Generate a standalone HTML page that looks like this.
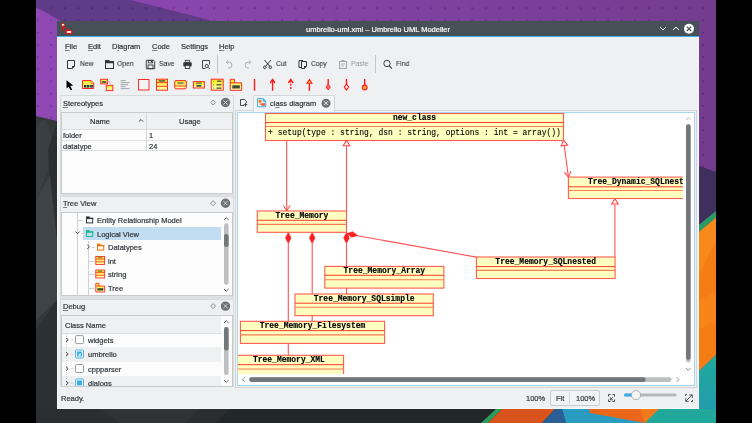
<!DOCTYPE html>
<html><head><meta charset="utf-8"><title>Umbrello</title>
<style>
*{margin:0;padding:0;box-sizing:border-box}
html,body{width:752px;height:423px;overflow:hidden;background:#000}
body{position:relative;font-family:"Liberation Sans",sans-serif;font-size:7.5px;color:#31363b}
.a{position:absolute}
.t{white-space:nowrap;line-height:10px;will-change:transform;-webkit-text-stroke:0.2px currentColor}
u{text-decoration-thickness:0.6px;text-underline-offset:0.9px;text-decoration-color:#7d8184}
.m{font-family:"Liberation Mono",monospace;font-size:8px;color:#000;white-space:nowrap;line-height:10px}
.b{font-weight:bold}
svg{position:absolute;overflow:visible}
</style></head><body>

<svg style="left:0;top:0" width="752" height="423" viewBox="0 0 752 423">
<defs>
<linearGradient id="pg" x1="36" y1="0" x2="716" y2="0" gradientUnits="userSpaceOnUse">
<stop offset="0" stop-color="#8f48b4"/><stop offset="1" stop-color="#733c8f"/></linearGradient>
<linearGradient id="tg" x1="699" y1="360" x2="716" y2="423" gradientUnits="userSpaceOnUse">
<stop offset="0" stop-color="#1fa99a"/><stop offset="1" stop-color="#2497b4"/></linearGradient>
<pattern id="dots" x="36.7" y="7.3" width="13.58" height="12.2" patternUnits="userSpaceOnUse">
<circle cx="1" cy="1" r="0.65" fill="#000" fill-opacity="0.55"/></pattern>
</defs>
<rect x="36" y="0" width="680" height="423" fill="url(#pg)"/>
<polygon points="36,0 131,0 213,21 61,21 36,7" fill="#603b88"/>
<rect x="36" y="0" width="680" height="175" fill="url(#dots)"/>
<polygon points="36,116 57,121 57,423 36,423" fill="#34383b"/>
<polygon points="36,125 45,119 57,150 36,200" fill="#3c3f42"/>
<polygon points="48,150 57,121 57,240 52,240" fill="#2b2f32"/>
<polygon points="36,200 50,175 57,240 57,300 36,320" fill="#404346"/>
<polygon points="36,330 57,300 57,423 36,423" fill="#2c3033"/>
<polygon points="699,166 716,172 716,211 699,225" fill="#3f2f5c"/>
<polygon points="699,225 716,211 716,218 699,232" fill="#2a9d62"/>
<polygon points="699,232 716,218 716,355 699,371" fill="#f47d16"/><polygon points="699,232 716,218 716,240 699,275" fill="#f8891c"/><polygon points="699,300 716,292 716,320 699,330" fill="#f68418"/>
<polygon points="699,371 716,355 716,423 699,423" fill="url(#tg)"/>
<rect x="36" y="409" width="680" height="14" fill="#22282a"/><polygon points="36,409 230,409 215,423 36,423" fill="#2a2e31"/><polygon points="100,409 200,409 185,423 120,423" fill="#2f3336"/>
<polygon points="496,409 502,409 488,423 481,423" fill="#2a9d5c"/>
<polygon points="502,409 555,409 542,423 488,423" fill="#d9541d"/>
<polygon points="555,409 562,409 566,423 542,423" fill="#2a5f96"/>
<polygon points="562,409 716,409 716,423 566,423" fill="#2a9cc2"/>
<polygon points="589,409 659,409 645,423 590,413" fill="#ea661b"/>
<polygon points="640,409 659,409 645,423" fill="#f27a1c"/>
<polygon points="659,409 716,409 716,423 645,423" fill="#22a89b"/>
</svg>

<div class="a" style="left:57px;top:21px;width:642px;height:388px;background:#eff0f1;border:1px solid #f6f7f7"></div>
<div class="a" style="left:57px;top:21px;width:642px;height:15px;background:#475057"></div>
<div class="a" style="left:57px;top:36px;width:642px;height:1px;background:#3daee9"></div>
<div class="a t" style="left:57.00px;top:25.20px;font-size:7.5px;color:#fcfcfc;width:642px;text-align:center">umbrello-uml.xmi – Umbrello UML Modeller</div>
<svg style="left:0;top:0" width="752" height="423" viewBox="0 0 752 423">
<path d="M63 26.3 V28.8 M61.6 27.4 H64.4 M63 28.8 L61.6 31 M63 28.8 L64.4 31 M63.8 26.2 L68.3 30.2" stroke="#ee1111" stroke-width="1" fill="none"/>
<circle cx="63" cy="24.8" r="1.5" fill="#fff" stroke="#ee1111" stroke-width="0.9"/>
<ellipse cx="69" cy="32" rx="3.1" ry="1.7" fill="#fff" stroke="#ee1111" stroke-width="1.2"/>
</svg>
<svg style="left:658px;top:23px" width="40" height="12" viewBox="0 0 40 12">
<path d="M2 4 L5 7 L8 4" stroke="#fcfcfc" stroke-width="1" fill="none"/>
<path d="M15 7 L18 4 L21 7" stroke="#fcfcfc" stroke-width="1" fill="none"/>
<circle cx="31" cy="5.8" r="5" fill="#fcfcfc"/>
<path d="M28.8 3.6 L33.2 8 M33.2 3.6 L28.8 8" stroke="#475057" stroke-width="1.2"/>
</svg>
<div class="a t" style="left:65.00px;top:41.80px;font-size:7.5px;color:#31363b;"><u>F</u>ile</div>
<div class="a t" style="left:88.00px;top:41.80px;font-size:7.5px;color:#31363b;"><u>E</u>dit</div>
<div class="a t" style="left:111.80px;top:41.80px;font-size:7.5px;color:#31363b;">D<u>i</u>agram</div>
<div class="a t" style="left:152.40px;top:41.80px;font-size:7.5px;color:#31363b;"><u>C</u>ode</div>
<div class="a t" style="left:180.90px;top:41.80px;font-size:7.5px;color:#31363b;">Setti<u>n</u>gs</div>
<div class="a t" style="left:219.40px;top:41.80px;font-size:7.5px;color:#31363b;"><u>H</u>elp</div>
<div class="a t" style="left:79.70px;top:59.03px;font-size:7.7px;color:#31363b;transform:scaleX(0.88);transform-origin:0 0;-webkit-text-stroke:0.1px currentColor">New</div>
<div class="a t" style="left:117.00px;top:59.03px;font-size:7.7px;color:#31363b;transform:scaleX(0.88);transform-origin:0 0;-webkit-text-stroke:0.1px currentColor">Open</div>
<div class="a t" style="left:159.00px;top:59.03px;font-size:7.7px;color:#31363b;transform:scaleX(0.88);transform-origin:0 0;-webkit-text-stroke:0.1px currentColor">Save</div>
<div class="a t" style="left:275.90px;top:59.03px;font-size:7.7px;color:#31363b;transform:scaleX(0.88);transform-origin:0 0;-webkit-text-stroke:0.1px currentColor">Cut</div>
<div class="a t" style="left:311.00px;top:59.03px;font-size:7.7px;color:#31363b;transform:scaleX(0.88);transform-origin:0 0;-webkit-text-stroke:0.1px currentColor">Copy</div>
<div class="a t" style="left:350.90px;top:59.03px;font-size:7.7px;color:#a0a3a6;transform:scaleX(0.88);transform-origin:0 0;-webkit-text-stroke:0.1px currentColor">Paste</div>
<div class="a t" style="left:396.00px;top:59.03px;font-size:7.7px;color:#31363b;transform:scaleX(0.88);transform-origin:0 0;-webkit-text-stroke:0.1px currentColor">Find</div>
<div class="a" style="left:217px;top:55px;width:1px;height:18px;background:#c4c6c8"></div>
<div class="a" style="left:375px;top:55px;width:1px;height:18px;background:#c4c6c8"></div>
<div class="a" style="left:60px;top:193px;width:174px;height:4px;background:#dfe0e2"></div>
<div class="a" style="left:60px;top:296px;width:174px;height:4px;background:#dfe0e2"></div>
<div class="a" style="left:60px;top:95px;width:174px;height:99px;border:1px solid #d9dadc;background:#eff0f1"></div>
<div class="a t" style="left:63.00px;top:99.00px;font-size:7.5px;color:#31363b;"><u>S</u>tereotypes</div>
<svg style="left:0;top:0" width="752" height="423" viewBox="0 0 752 423"><path d="M213.1 100.0 L215.6 102.5 L213.1 105.0 L210.6 102.5 Z" fill="none" stroke="#7f8386" stroke-width="0.9"/><circle cx="225.5" cy="102.5" r="4.7" fill="#6e7276"/><path d="M223.39999999999998 100.4 L227.6 104.6 M227.6 100.4 L223.39999999999998 104.6" stroke="#e6e7e8" stroke-width="0.8"/></svg>
<div class="a" style="left:61px;top:112px;width:172px;height:82px;border:1px solid #c8cacc;background:#fcfcfc"></div>
<div class="a" style="left:62px;top:113px;width:170px;height:17px;background:#eff0f1"></div>
<div class="a" style="left:62px;top:129px;width:170px;height:1px;background:#dcdddf"></div>
<div class="a" style="left:62px;top:140px;width:170px;height:1px;background:#e2e3e4"></div>
<div class="a" style="left:62px;top:150px;width:170px;height:1px;background:#dcdddf"></div>
<div class="a" style="left:146px;top:113px;width:1px;height:38px;background:#d6d7d9"></div>
<div class="a t" style="left:90.00px;top:117.20px;font-size:7.5px;color:#31363b;">Name</div>
<div class="a t" style="left:178.60px;top:117.20px;font-size:7.5px;color:#31363b;">Usage</div>
<svg style="left:138px;top:118px" width="6" height="5" viewBox="0 0 6 5"><path d="M0.8 3.7 L3 1.5 L5.2 3.7" fill="none" stroke="#31363b" stroke-width="0.9"/></svg>
<div class="a t" style="left:63.10px;top:131.00px;font-size:7.5px;color:#31363b;">folder</div>
<div class="a t" style="left:149.20px;top:131.00px;font-size:7.5px;color:#31363b;">1</div>
<div class="a t" style="left:63.10px;top:141.70px;font-size:7.5px;color:#31363b;">datatype</div>
<div class="a t" style="left:149.20px;top:141.70px;font-size:7.5px;color:#31363b;">24</div>
<div class="a" style="left:60px;top:196px;width:174px;height:100px;border:1px solid #d9dadc;background:#eff0f1"></div>
<div class="a t" style="left:63.10px;top:199.20px;font-size:7.5px;color:#31363b;"><u>T</u>ree View</div>
<svg style="left:0;top:0" width="752" height="423" viewBox="0 0 752 423"><path d="M213.1 200.7 L215.6 203.2 L213.1 205.7 L210.6 203.2 Z" fill="none" stroke="#7f8386" stroke-width="0.9"/><circle cx="225.5" cy="203.2" r="4.7" fill="#6e7276"/><path d="M223.39999999999998 201.1 L227.6 205.29999999999998 M227.6 201.1 L223.39999999999998 205.29999999999998" stroke="#e6e7e8" stroke-width="0.8"/></svg>
<div class="a" style="left:61px;top:212px;width:172px;height:84px;border:1px solid #c8cacc;background:#fcfcfc"></div>
<div class="a" style="left:83px;top:227px;width:138px;height:13px;background:#c2dcf1"></div>
<div class="a" style="left:77px;top:213px;width:1px;height:82px;background:#d0d2d4"></div>
<div class="a" style="left:88px;top:241px;width:1px;height:54px;background:#d0d2d4"></div>
<div class="a" style="left:78px;top:220px;width:5px;height:1px;background:#d0d2d4"></div>
<div class="a" style="left:81px;top:233px;width:2px;height:1px;background:#d0d2d4"></div>
<div class="a" style="left:92px;top:247px;width:3px;height:1px;background:#d0d2d4"></div>
<div class="a" style="left:89px;top:261px;width:5px;height:1px;background:#d0d2d4"></div>
<div class="a" style="left:89px;top:274px;width:5px;height:1px;background:#d0d2d4"></div>
<div class="a" style="left:89px;top:288px;width:5px;height:1px;background:#d0d2d4"></div>
<div class="a t" style="left:97.10px;top:216.20px;font-size:7.5px;color:#31363b;">Entity Relationship Model</div>
<div class="a t" style="left:97.10px;top:229.70px;font-size:7.5px;color:#31363b;">Logical View</div>
<div class="a t" style="left:107.80px;top:243.20px;font-size:7.5px;color:#31363b;">Datatypes</div>
<div class="a t" style="left:107.80px;top:257.00px;font-size:7.5px;color:#31363b;">int</div>
<div class="a t" style="left:107.80px;top:270.40px;font-size:7.5px;color:#31363b;">string</div>
<div class="a t" style="left:107.80px;top:284.00px;font-size:7.5px;color:#31363b;">Tree</div>
<svg style="left:0;top:0" width="752" height="423" viewBox="0 0 752 423"><rect x="86.5" y="218.20000000000002" width="6.2" height="4.7" fill="none" stroke="#31363b" stroke-width="1"/><rect x="86" y="216.4" width="3.6" height="2.4" fill="#31363b"/><rect x="86" y="217.9" width="7.2" height="1.2" fill="#31363b"/><rect x="86.5" y="231.8" width="6.2" height="4.7" fill="none" stroke="#1dba8f" stroke-width="1"/><rect x="86" y="230" width="3.6" height="2.4" fill="#1dba8f"/><rect x="86" y="231.5" width="7.2" height="1.2" fill="#1dba8f"/><path d="M75.5 231.5 L77.6 233.6 L79.7 231.5" fill="none" stroke="#31363b" stroke-width="0.9"/><path d="M87.3 244.7 L89.4 246.8 L87.3 248.9" fill="none" stroke="#31363b" stroke-width="0.9"/><rect x="97.5" y="245.4" width="6.2" height="4.7" fill="none" stroke="#f67400" stroke-width="1"/><rect x="97" y="243.6" width="3.6" height="2.4" fill="#f67400"/><rect x="97" y="245.1" width="7.2" height="1.2" fill="#f67400"/><rect x="95.8" y="256.5" width="8.8" height="8" fill="url(#yg)" stroke="#ff3030" stroke-width="0.9"/><path d="M95.8 259.1 H104.6 M95.8 261.8 H104.6" stroke="#ff3030" stroke-width="0.8"/><rect x="97.8" y="257.3" width="4.6" height="1" fill="#6a7a4a"/><rect x="95.8" y="270" width="8.8" height="8" fill="url(#yg)" stroke="#ff3030" stroke-width="0.9"/><path d="M95.8 272.6 H104.6 M95.8 275.3 H104.6" stroke="#ff3030" stroke-width="0.8"/><rect x="97.8" y="270.8" width="4.6" height="1" fill="#6a7a4a"/><path d="M95.8 286 V283.3 H99 V286 H104.6 V292 H95.8 Z" fill="url(#yg)" stroke="#ff3030" stroke-width="0.9"/><path d="M95.8 286 H99" stroke="#ff3030" stroke-width="0.8"/><rect x="97.3" y="288.2" width="6" height="2.3" fill="#3a4a2a"/><path d="M224 220 L226.3 217.8 L228.6 220" fill="none" stroke="#31363b" stroke-width="0.8"/><rect x="224" y="223.3" width="4.6" height="61.5" rx="2.3" fill="#bdbfc1"/><rect x="224" y="234" width="4.6" height="13" rx="2.3" fill="#73777b"/><path d="M224 289 L226.3 291.2 L228.6 289" fill="none" stroke="#31363b" stroke-width="0.8"/></svg>
<div class="a" style="left:60px;top:299px;width:174px;height:88px;border:1px solid #d9dadc;background:#eff0f1"></div>
<div class="a t" style="left:63.10px;top:301.80px;font-size:7.5px;color:#31363b;"><u>D</u>ebug</div>
<svg style="left:0;top:0" width="752" height="423" viewBox="0 0 752 423"><path d="M213.1 303.6 L215.6 306.1 L213.1 308.6 L210.6 306.1 Z" fill="none" stroke="#7f8386" stroke-width="0.9"/><circle cx="225.5" cy="306.1" r="4.7" fill="#6e7276"/><path d="M223.39999999999998 304.0 L227.6 308.20000000000005 M227.6 304.0 L223.39999999999998 308.20000000000005" stroke="#e6e7e8" stroke-width="0.8"/></svg>
<div class="a" style="left:61px;top:315px;width:172px;height:72px;border:1px solid #c8cacc;background:#fcfcfc"></div>
<div class="a" style="left:62px;top:316px;width:159px;height:17px;background:#eff0f1"></div>
<div class="a" style="left:62px;top:333px;width:159px;height:1px;background:#dcdddf"></div>
<div class="a" style="left:62px;top:347px;width:159px;height:14.5px;background:#eff0f1"></div>
<div class="a" style="left:62px;top:376px;width:159px;height:10px;background:#eff0f1"></div>
<div class="a t" style="left:64.80px;top:321.00px;font-size:7.5px;color:#31363b;">Class Name</div>
<div class="a t" style="left:88.30px;top:336.00px;font-size:7.5px;color:#31363b;">widgets</div>
<div class="a t" style="left:88.30px;top:350.40px;font-size:7.5px;color:#31363b;">umbrello</div>
<div class="a t" style="left:88.30px;top:364.90px;font-size:7.5px;color:#31363b;">cppparser</div>
<div class="a t" style="left:88.30px;top:379.30px;font-size:7.5px;color:#31363b;">dialogs</div>
<svg style="left:0;top:0" width="752" height="423" viewBox="0 0 752 423"><path d="M66.5 334 V386" stroke="#c8cacc" stroke-width="0.8" stroke-dasharray="1 1"/><path d="M66 337.8 L68.2 339.8 L66 341.8" fill="none" stroke="#31363b" stroke-width="0.9"/><path d="M71 339.8 H73.5" stroke="#c8cacc" stroke-width="0.8"/><rect x="75.5" y="335.6" width="8" height="8" rx="1" fill="#fcfcfc" stroke="#8c9093" stroke-width="0.9"/><path d="M66 352.2 L68.2 354.2 L66 356.2" fill="none" stroke="#31363b" stroke-width="0.9"/><path d="M71 354.2 H73.5" stroke="#c8cacc" stroke-width="0.8"/><rect x="75.5" y="350.0" width="8" height="8" rx="1" fill="#fcfcfc" stroke="#3daee9" stroke-width="0.9"/><rect x="77" y="351.5" width="5" height="5" fill="#3daee9"/><path d="M77.8 355.7 L80.6 352.9 V355.7 Z" fill="#fcfcfc"/><path d="M66 366.7 L68.2 368.7 L66 370.7" fill="none" stroke="#31363b" stroke-width="0.9"/><path d="M71 368.7 H73.5" stroke="#c8cacc" stroke-width="0.8"/><rect x="75.5" y="364.5" width="8" height="8" rx="1" fill="#fcfcfc" stroke="#8c9093" stroke-width="0.9"/><path d="M66 381.1 L68.2 383.1 L66 385.1" fill="none" stroke="#31363b" stroke-width="0.9"/><path d="M71 383.1 H73.5" stroke="#c8cacc" stroke-width="0.8"/><rect x="75.5" y="378.90000000000003" width="8" height="8" rx="1" fill="#fcfcfc" stroke="#3daee9" stroke-width="0.9"/><rect x="77" y="380.40000000000003" width="5" height="5" fill="#3daee9"/><path d="M224 323 L226.3 320.8 L228.6 323" fill="none" stroke="#31363b" stroke-width="0.8"/><rect x="224" y="327" width="4.6" height="48" rx="2.3" fill="#bdbfc1"/><rect x="224" y="327" width="4.6" height="23.5" rx="2.3" fill="#73777b"/><path d="M224 380 L226.3 382.2 L228.6 380" fill="none" stroke="#31363b" stroke-width="0.8"/></svg>
<div class="a" style="left:61px;top:386px;width:172px;height:1px;background:#c8cacc"></div>
<div class="a" style="left:58px;top:387px;width:176px;height:20px;background:#eff0f1"></div>
<div class="a t" style="left:60.70px;top:394.20px;font-size:7.5px;color:#31363b;">Ready.</div>
<div class="a" style="left:235px;top:110px;width:462px;height:278px;border:1px solid #d3d5d7;background:#eff0f1"></div>
<div class="a" style="left:253px;top:95px;width:82px;height:17px;background:#f3f4f5;border:1px solid #d3d5d7;border-bottom:none;border-radius:2px 2px 0 0"></div>
<div class="a t" style="left:269.90px;top:98.90px;font-size:7.5px;color:#31363b;">cl<u>a</u>ss diagram</div>
<svg style="left:0;top:0" width="752" height="423" viewBox="0 0 752 423"><path d="M240.5 99.5 H244.5 L246.5 101.5 V103 M240.5 99.5 V105.5 H244" fill="none" stroke="#31363b" stroke-width="0.9"/><path d="M245.5 102.8 V106.6 M243.6 104.7 H247.4" stroke="#31363b" stroke-width="0.9"/><path d="M257.5 98.5 H263.2 L265.8 101.1 V106.8 H257.5 Z" fill="#e8f4fc" stroke="#3daee9" stroke-width="1"/><path d="M263 98.5 V101.3 H265.8" fill="#3daee9" stroke="#3daee9" stroke-width="0.6"/><rect x="258.7" y="99.8" width="2.8" height="2.8" fill="#f67400"/><rect x="261.3" y="103.2" width="3.6" height="2.6" fill="#f05a28"/><path d="M260.1 102.6 V104.5 H261.3" stroke="#f67400" stroke-width="0.8" fill="none"/><circle cx="326" cy="103.2" r="4.5" fill="#6e7276"/><path d="M324 101.2 L328 105.2 M328 101.2 L324 105.2" stroke="#eff0f1" stroke-width="1"/></svg>
<div class="a" style="left:237px;top:112px;width:457.5px;height:274px;border:1px solid #a6d6f0;background:#fff"></div>
<svg style="left:0;top:0;will-change:transform" width="752" height="423" viewBox="0 0 752 423"><defs><clipPath id="vp"><rect x="237.8" y="112.8" width="445" height="261.2"/></clipPath></defs><g clip-path="url(#vp)"><path d="M286.7 140.2 L286.7 211" fill="none" stroke="#ff5252" stroke-width="1.1"/><path d="M290.00 205.50 L286.7 211 L283.40 205.50" fill="none" stroke="#ff5252" stroke-width="1.1"/><path d="M346.5 145.5 L346.5 211" fill="none" stroke="#ff5252" stroke-width="1.1"/><path d="M343.20 145.70 L346.5 140.4 L349.80 145.70 Z" fill="#fff" stroke="#ff4545" stroke-width="1.1"/><path d="M564.2 145 L568.4 177" fill="none" stroke="#ff5252" stroke-width="1.1"/><path d="M561.10 145.88 L563.7 140.2 L567.64 145.04 Z" fill="#fff" stroke="#ff4545" stroke-width="1.1"/><path d="M570.98 171.23 L568.4 177.1 L564.43 172.06" fill="none" stroke="#ff5252" stroke-width="1.1"/><path d="M614.9 204.7 L614.9 257" fill="none" stroke="#ff5252" stroke-width="1.1"/><path d="M611.60 204.00 L614.9 198.7 L618.20 204.00 Z" fill="#fff" stroke="#ff4545" stroke-width="1.1"/><path d="M288.3 243.5 L288.3 355.3" fill="none" stroke="#ff5252" stroke-width="1.1"/><path d="M288.3 232.4 L285.50 237.90 L288.30 243.40 L291.10 237.90 Z" fill="#ff2020" stroke="#ff2020" stroke-width="0.6"/><path d="M312.2 243.5 L312.2 321.3" fill="none" stroke="#ff5252" stroke-width="1.1"/><path d="M312.2 232.4 L309.40 237.90 L312.20 243.40 L315.00 237.90 Z" fill="#ff2020" stroke="#ff2020" stroke-width="0.6"/><path d="M346.5 243.5 L346.5 294" fill="none" stroke="#ff5252" stroke-width="1.1"/><path d="M346.5 232.4 L343.70 237.90 L346.50 243.40 L349.30 237.90 Z" fill="#ff2020" stroke="#ff2020" stroke-width="0.6"/><path d="M356 235.5 L476.3 257.1" fill="none" stroke="#ff5252" stroke-width="1.1"/><path d="M346.8 233.5 L351.71 237.24 L357.62 235.47 L352.71 231.73 Z" fill="#ff2020" stroke="#ff2020" stroke-width="0.6"/><rect x="265.5" y="113.5" width="298.0" height="27.0" fill="#ffffc0" stroke="#ff5c50" stroke-width="1.1"/><path d="M265.5 122.5 H563.5" stroke="#ff3a2a" stroke-width="1"/><path d="M265.5 126.5 H563.5" stroke="#ff7a55" stroke-width="1.1"/><text x="392.90" y="119.9" textLength="43.20" lengthAdjust="spacingAndGlyphs" font-family="Liberation Mono" font-weight="bold" font-size="8.6" fill="#000" stroke="#000" stroke-width="0.15">new_class</text><text x="268.1" y="134.6" textLength="292.80" lengthAdjust="spacingAndGlyphs" font-family="Liberation Mono" font-size="8.5" fill="#000" stroke="#000" stroke-width="0.1">+ setup(type : string, dsn : string, options : int = array())</text><rect x="257.3" y="211" width="89.19999999999999" height="21.30000000000001" fill="#ffffc0" stroke="#ff5c50" stroke-width="1.1"/><path d="M257.3 220.3 H346.5" stroke="#ff3a2a" stroke-width="1"/><path d="M257.3 224.4 H346.5" stroke="#ff7a55" stroke-width="1.1"/><text x="275.50" y="217.8" textLength="52.80" lengthAdjust="spacingAndGlyphs" font-family="Liberation Mono" font-weight="bold" font-size="8.6" fill="#000" stroke="#000" stroke-width="0.15">Tree_Memory</text><rect x="568.4" y="177.1" width="144.60000000000002" height="21.400000000000006" fill="#ffffc0" stroke="#ff5c50" stroke-width="1.1"/><path d="M568.4 186.8 H713" stroke="#ff3a2a" stroke-width="1"/><path d="M568.4 190.5 H713" stroke="#ff7a55" stroke-width="1.1"/><text x="587.90" y="183.9" textLength="105.60" lengthAdjust="spacingAndGlyphs" font-family="Liberation Mono" font-weight="bold" font-size="8.6" fill="#000" stroke="#000" stroke-width="0.15">Tree_Dynamic_SQLnested</text><rect x="476.4" y="257" width="138.70000000000005" height="21.5" fill="#ffffc0" stroke="#ff5c50" stroke-width="1.1"/><path d="M476.4 266.6 H615.1" stroke="#ff3a2a" stroke-width="1"/><path d="M476.4 270.4 H615.1" stroke="#ff7a55" stroke-width="1.1"/><text x="495.35" y="263.8" textLength="100.80" lengthAdjust="spacingAndGlyphs" font-family="Liberation Mono" font-weight="bold" font-size="8.6" fill="#000" stroke="#000" stroke-width="0.15">Tree_Memory_SQLnested</text><rect x="324.8" y="266.4" width="119.09999999999997" height="21.700000000000045" fill="#ffffc0" stroke="#ff5c50" stroke-width="1.1"/><path d="M324.8 275.3 H443.9" stroke="#ff3a2a" stroke-width="1"/><path d="M324.8 279.8 H443.9" stroke="#ff7a55" stroke-width="1.1"/><text x="343.55" y="273.2" textLength="81.60" lengthAdjust="spacingAndGlyphs" font-family="Liberation Mono" font-weight="bold" font-size="8.6" fill="#000" stroke="#000" stroke-width="0.15">Tree_Memory_Array</text><rect x="295" y="294" width="138.3" height="21.69999999999999" fill="#ffffc0" stroke="#ff5c50" stroke-width="1.1"/><path d="M295 303.2 H433.3" stroke="#ff3a2a" stroke-width="1"/><path d="M295 307.2 H433.3" stroke="#ff7a55" stroke-width="1.1"/><text x="313.75" y="300.8" textLength="100.80" lengthAdjust="spacingAndGlyphs" font-family="Liberation Mono" font-weight="bold" font-size="8.6" fill="#000" stroke="#000" stroke-width="0.15">Tree_Memory_SQLsimple</text><rect x="240.4" y="321.3" width="144.20000000000002" height="22.099999999999966" fill="#ffffc0" stroke="#ff5c50" stroke-width="1.1"/><path d="M240.4 330.6 H384.6" stroke="#ff3a2a" stroke-width="1"/><path d="M240.4 334.9 H384.6" stroke="#ff7a55" stroke-width="1.1"/><text x="259.70" y="328.1" textLength="105.60" lengthAdjust="spacingAndGlyphs" font-family="Liberation Mono" font-weight="bold" font-size="8.6" fill="#000" stroke="#000" stroke-width="0.15">Tree_Memory_Filesystem</text><rect x="234.2" y="355.3" width="109.40000000000003" height="21.69999999999999" fill="#ffffc0" stroke="#ff5c50" stroke-width="1.1"/><path d="M234.2 364.7 H343.6" stroke="#ff3a2a" stroke-width="1"/><path d="M234.2 369 H343.6" stroke="#ff7a55" stroke-width="1.1"/><text x="252.90" y="362.1" textLength="72.00" lengthAdjust="spacingAndGlyphs" font-family="Liberation Mono" font-weight="bold" font-size="8.6" fill="#000" stroke="#000" stroke-width="0.15">Tree_Memory_XML</text></g><path d="M686 120 L688.3 117.8 L690.6 120" fill="none" stroke="#a9acaf" stroke-width="0.8"/><rect x="686" y="124.2" width="4.6" height="238.4" rx="2.3" fill="#bdbfc1"/><rect x="686" y="124.2" width="4.6" height="235.5" rx="2.3" fill="#73777b"/><path d="M686 368 L688.3 370.3 L690.6 368" fill="none" stroke="#6e7276" stroke-width="0.8"/><path d="M244.8 377.3 L242.6 379.6 L244.8 381.9" fill="none" stroke="#6e7276" stroke-width="0.8"/><rect x="249.2" y="377.3" width="422.4" height="4.6" rx="2.3" fill="#bdbfc1"/><rect x="249.2" y="377.3" width="396.5" height="4.6" rx="2.3" fill="#73777b"/><path d="M676.6 377.3 L678.9 379.6 L676.6 381.9" fill="none" stroke="#6e7276" stroke-width="0.8"/></svg>
<div class="a t" style="left:525.50px;top:394.40px;font-size:7.5px;color:#31363b;">100%</div>
<div class="a" style="left:550px;top:390px;width:50px;height:16px;border:1px solid #c8cacc;border-radius:2px;background:#f2f3f4"></div>
<div class="a" style="left:569px;top:392px;width:1px;height:12px;background:#d6d7d9"></div>
<div class="a t" style="left:555.50px;top:394.40px;font-size:7.5px;color:#31363b;">Fit</div>
<div class="a t" style="left:576.20px;top:394.40px;font-size:7.5px;color:#31363b;">100%</div>
<svg style="left:0;top:0" width="752" height="423" viewBox="0 0 752 423"><path d="M608.5 396.5 V394.5 H610.5 M612.5 394.5 H614.5 V396.5 M614.5 399.5 V401.5 H612.5 M610.5 401.5 H608.5 V399.5" fill="none" stroke="#31363b" stroke-width="0.9"/><path d="M610.3 399.8 L613 397.1 M610.3 397.3 V399.8 H612.8" fill="none" stroke="#31363b" stroke-width="0.8"/><rect x="624" y="393.6" width="52.5" height="3" rx="1.5" fill="#b5b8ba"/><rect x="624" y="393.6" width="12" height="3" rx="1.5" fill="#3daee9"/><circle cx="636" cy="395.1" r="4.6" fill="#f4f5f5" stroke="#9ea1a4" stroke-width="0.8"/><path d="M685.5 394.5 H687 M685.5 394.5 V396 M692.5 401.5 H691 M692.5 401.5 V400 M692.3 394.7 L688.8 398.2 M689.2 395 H692.3 V398 M685.7 401.3 L689 398 M685.7 398.2 V401.3 H688.8" fill="none" stroke="#31363b" stroke-width="0.8"/></svg>
<svg style="left:0;top:0" width="752" height="423" viewBox="0 0 752 423"><path d="M67.5 60.5 H74.5 V66.3 L72.3 68.5 H67.5 Z" fill="none" stroke="#31363b" stroke-width="1"/><path d="M74.8 66 L72 68.8 L72 66 Z" fill="#31363b"/><rect x="105.5" y="61.5" width="8" height="7" fill="none" stroke="#31363b"/><path d="M105 60 H109 L110 61 H114 V63.3 H105 Z" fill="#31363b"/><path d="M146.3 60.3 H153.6 L154.7 61.4 V68.7 H146.3 Z" fill="none" stroke="#31363b" stroke-width="0.9"/><rect x="148.3" y="60.3" width="4.4" height="2.6" fill="none" stroke="#31363b" stroke-width="0.8"/><rect x="151" y="60.8" width="1.2" height="1.6" fill="#31363b"/><rect x="148" y="65" width="5" height="3.7" fill="none" stroke="#31363b" stroke-width="0.9"/><rect x="185.3" y="60.3" width="4.4" height="2" fill="none" stroke="#31363b" stroke-width="0.8"/><rect x="183.3" y="62.3" width="8.4" height="4.2" rx="0.8" fill="#31363b"/><rect x="185.3" y="65.3" width="4.4" height="3.2" fill="#eff0f1" stroke="#31363b" stroke-width="0.9"/><path d="M202.5 60.5 H209.5 V64.5 M202.5 60.5 V68.5 H205.5" fill="none" stroke="#31363b" stroke-width="0.9"/><circle cx="206.8" cy="66" r="1.6" fill="none" stroke="#31363b" stroke-width="0.9"/><path d="M208 67.2 L209.8 69" stroke="#31363b" stroke-width="0.9"/><path d="M226.3 62.2 H229 A2.9 2.9 0 0 1 229 68 H228" fill="none" stroke="#a5a8ab" stroke-width="0.9"/><path d="M228 60.5 L226.2 62.2 L228 63.9" fill="none" stroke="#a5a8ab" stroke-width="0.9"/><path d="M250.7 62.2 H248 A2.9 2.9 0 0 0 248 68 H249" fill="none" stroke="#a5a8ab" stroke-width="0.9"/><path d="M249 60.5 L250.8 62.2 L249 63.9" fill="none" stroke="#a5a8ab" stroke-width="0.9"/><path d="M264.5 60 L270 66.5 M271 60 L265.5 66.5" stroke="#31363b" stroke-width="1"/><circle cx="264.8" cy="67.3" r="1.3" fill="none" stroke="#31363b"/><circle cx="270.3" cy="67.3" r="1.3" fill="none" stroke="#31363b"/><path d="M299 60.5 H303 M299 60.5 V67.5 H301" fill="none" stroke="#31363b"/><path d="M301.5 61.5 H306.5 V66 L304.5 68.5 H301.5 Z" fill="none" stroke="#31363b"/><path d="M306.8 66 L304 68.8 L304 66 Z" fill="#31363b"/><rect x="339.5" y="61.5" width="7" height="7" fill="none" stroke="#a5a8ab"/><rect x="341.5" y="60" width="3" height="2" fill="#a5a8ab"/><path d="M341 64 H345 M341 66 H344" stroke="#a5a8ab" stroke-width="0.8"/><circle cx="387" cy="63.5" r="3.2" fill="none" stroke="#31363b" stroke-width="0.95"/><path d="M389.3 65.9 L392 68.6" stroke="#31363b" stroke-width="1.1"/><path d="M66.5 80.2 L66.5 88.5 L68.6 86.7 L70.6 90.2 L72.2 89.4 L70.3 85.9 L73.2 85.6 Z" fill="#000"/><defs><linearGradient id="yg" x1="0" y1="0" x2="0" y2="1"><stop offset="0" stop-color="#f5ec1a"/><stop offset="1" stop-color="#fdfbb0"/></linearGradient></defs><path d="M82.5 80.5 H91 L93.7 83.2 V88.5 H82.5 Z" fill="url(#yg)" stroke="#ff2a2a" stroke-width="1"/><path d="M91 80.5 V83.2 H93.7" fill="#f5ec1a" stroke="#ff2a2a" stroke-width="0.6"/><rect x="84" y="85" width="2.3" height="2.6" fill="#2a3a2a"/><rect x="86.8" y="85" width="2.4" height="2.6" fill="#2a3a2a"/><rect x="89.8" y="85" width="3.4" height="2.6" fill="#2f4f5f"/><rect x="100.7" y="79.3" width="6.8" height="4.6" fill="url(#yg)" stroke="#ff2a2a"/><rect x="101.8" y="81.2" width="4.6" height="1.6" fill="#3a4a2a"/><rect x="106.3" y="85.4" width="6.5" height="5.2" fill="url(#yg)" stroke="#ff2a2a"/><path d="M107.5 81.6 H110 V85.4" fill="none" stroke="#f7a0a0" stroke-width="0.8"/><rect x="120.6" y="80.3" width="5" height="0.8" fill="#8e969c"/><rect x="120.6" y="82.3" width="9" height="0.8" fill="#8e969c"/><rect x="120.6" y="84.3" width="7.5" height="0.8" fill="#8e969c"/><rect x="120.6" y="86.3" width="5" height="0.8" fill="#8e969c"/><rect x="120.6" y="88.3" width="9" height="0.8" fill="#8e969c"/><rect x="138.5" y="79.5" width="10.5" height="10.5" fill="#f4f4f4" stroke="#ff2a2a" stroke-width="1"/><rect x="156.5" y="79.2" width="11" height="11" fill="url(#yg)" stroke="#ff2a2a"/><path d="M156.5 82.6 H167.5 M156.5 86.3 H167.5" stroke="#ff2a2a" stroke-width="0.9"/><rect x="158.7" y="80.2" width="6.6" height="1.5" fill="#4a5a3a"/><rect x="174.7" y="80.6" width="11.6" height="8.2" rx="1.2" fill="url(#yg)" stroke="#ff2a2a"/><path d="M174.7 86 H186.3" stroke="#ff2a2a" stroke-width="0.9"/><rect x="177.5" y="82" width="6" height="2.2" fill="#8a9a5a"/><rect x="193.4" y="81.6" width="11" height="6.4" fill="url(#yg)" stroke="#ff2a2a"/><rect x="195.8" y="82.6" width="6" height="1.1" fill="#4a5a3a"/><rect x="196.4" y="85" width="5" height="1.7" fill="#3b4a3a"/><rect x="211.2" y="79.2" width="12" height="11" fill="url(#yg)" stroke="#ff2a2a"/><rect x="217" y="80.6" width="4.5" height="1.3" fill="#4a5a3a"/><rect x="216.5" y="84.1" width="5" height="1.3" fill="#4a5a3a"/><rect x="216.5" y="87.5" width="5" height="1.3" fill="#4a5a3a"/><path d="M213 81.3 H214 M213 84.8 H214 M213 88.2 H214" stroke="#4a5a3a" stroke-width="0.6"/><path d="M230.2 82.8 V79.3 H234.5 V82.8 H241.7 V90.3 H230.2 Z" fill="url(#yg)" stroke="#ff2a2a"/><path d="M230.2 82.8 H234.5" stroke="#ff2a2a"/><rect x="232.3" y="85.3" width="7.5" height="3.2" fill="#3b4a3a"/><path d="M254.5 79 V90.8" stroke="#ff1a1a" stroke-width="1.4"/><path d="M272.6 80.5 V90.8" stroke="#ff1a1a" stroke-width="1.4"/><path d="M270.2 83 L272.6 79.5 L275 83" fill="none" stroke="#ff1a1a" stroke-width="1.4"/><path d="M290.8 80.5 V90.8" stroke="#ff1a1a" stroke-width="1.4" stroke-dasharray="2 1.3"/><path d="M288.4 83 L290.8 79.5 L293.2 83" fill="none" stroke="#ff1a1a" stroke-width="1.4"/><path d="M309.4 83 V90.8" stroke="#ff1a1a" stroke-width="1.4"/><path d="M306.9 83.3 L309.4 79.5 L311.9 83.3 Z" fill="#ffd42a" stroke="#ff1a1a" stroke-width="1.1"/><path d="M328.2 79 V84.5" stroke="#ff1a1a" stroke-width="1.4"/><path d="M328.2 84 L330.3 87 L328.2 90 L326.1 87 Z" fill="#ff7a7a" stroke="#ff1a1a" stroke-width="1"/><path d="M346.5 79 V84.5" stroke="#ff1a1a" stroke-width="1.4"/><path d="M346.5 84 L348.6 87 L346.5 90 L344.4 87 Z" fill="#fff" stroke="#ff1a1a" stroke-width="1.2"/><path d="M364.7 79 V85" stroke="#ff1a1a" stroke-width="1.4"/><circle cx="364.7" cy="87.5" r="2.4" fill="#ffb030" stroke="#ff1a1a" stroke-width="1.1"/></svg>
</body></html>
